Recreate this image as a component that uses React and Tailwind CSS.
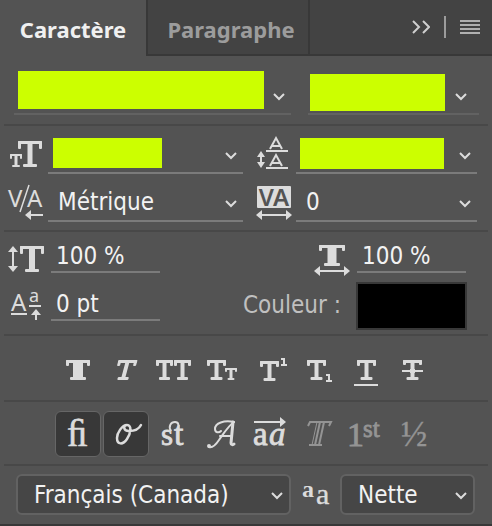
import React from "react";

const SERIF = '"Liberation Serif", serif';
const SANS = '"Noto Sans", sans-serif';

/* Slab-serif T drawn inside the box x, y, w, h. */
function SlabT({ x, y, w, h, stem = 4, bar = 3, drop = 6, foot = 12 }) {
  const cx = x + w / 2;
  return (
    <g>
      <rect x={x} y={y} width={w} height={bar} rx="1" />
      <rect x={x} y={y} width={bar} height={drop} rx="1" />
      <rect x={x + w - bar} y={y} width={bar} height={drop} rx="1" />
      <rect x={cx - stem / 2} y={y} width={stem} height={h} />
      <rect x={cx - foot / 2} y={y + h - bar} width={foot} height={bar} rx="1" />
    </g>
  );
}

function HArrow({ x1, x2, y, left = true, right = true }) {
  return (
    <g>
      <rect x={x1 + (left ? 4 : 0)} y={y - 1} width={x2 - x1 - (left ? 4 : 0) - (right ? 4 : 0)} height="2" />
      {left && <path d={`M${x1} ${y}l6 -5v10z`} />}
      {right && <path d={`M${x2} ${y}l-6 -5v10z`} />}
    </g>
  );
}

function VArrow({ x, y1, y2, up = true, down = true, head = 5 }) {
  return (
    <g>
      <rect x={x - 1} y={y1 + (up ? 4 : 0)} width="2" height={y2 - y1 - (up ? 4 : 0) - (down ? 4 : 0)} />
      {up && <path d={`M${x} ${y1}l${head} 6h-${head * 2}z`} />}
      {down && <path d={`M${x} ${y2}l${head} -6h-${head * 2}z`} />}
    </g>
  );
}

function Icon({ w = 46, h = 46, className = "", children }) {
  return (
    <svg
      aria-hidden="true"
      width={w}
      height={h}
      viewBox={`0 0 ${w} ${h}`}
      fill="currentColor"
      className={`block shrink-0 ${className}`}
    >
      {children}
    </svg>
  );
}

function Chevron({ className = "" }) {
  return (
    <svg
      aria-hidden="true"
      width="12"
      height="8"
      viewBox="0 0 12 8"
      fill="none"
      stroke="#dcdcdc"
      strokeWidth="2"
      className={`pointer-events-none block shrink-0 ${className}`}
    >
      <path d="M1 1l5 5 5-5" />
    </svg>
  );
}

function Combo({ label, className, inputClass, chevronClass }) {
  return (
    <div className={`flex items-start justify-between border-b-2 ${className}`}>
      <input aria-label={label} className={`min-w-0 bg-[#ccff00] px-2 text-black outline-none ${inputClass}`} />
      <button type="button" aria-label={`${label} : liste`} className={chevronClass}>
        <Chevron />
      </button>
    </div>
  );
}

function UnderlineSelect({ label, options }) {
  return (
    <div className="relative h-12 border-b-2 border-[#7b7b7b]">
      <select
        aria-label={label}
        className="mt-2.5 h-9 w-full appearance-none bg-transparent pl-[10px] text-2xl/9 text-[#f2f2f2] outline-none"
      >
        {options.map((o) => (
          <option key={o}>{o}</option>
        ))}
      </select>
      <Chevron className="absolute top-[26px] right-1.5" />
    </div>
  );
}

function BoxSelect({ label, options }) {
  return (
    <div className="relative">
      <select
        aria-label={label}
        className="block h-[41px] w-full appearance-none rounded-md border-2 border-[#626262] bg-[#464646] pl-4 text-2xl/9 text-[#f2f2f2] outline-none"
      >
        {options.map((o) => (
          <option key={o}>{o}</option>
        ))}
      </select>
      <Chevron className="absolute top-[18px] right-2" />
    </div>
  );
}

function ValueInput({ label, value }) {
  return (
    <input
      aria-label={label}
      defaultValue={value}
      className="mt-[7px] block h-[33px] w-full min-w-0 border-b-2 border-[#7b7b7b] bg-transparent pl-[5px] text-2xl/8 text-[#f2f2f2] outline-none"
    />
  );
}

const styleButtons = [
  ["Faux gras", <SlabT key="i" x={11} y={13} w={24} h={20} stem={10} foot={16} />],
  [
    "Faux italique",
    <g key="i" transform="translate(9 0) skewX(-15)">
      <SlabT x={10} y={13} w={19} h={20} stem={4} foot={11} />
    </g>,
  ],
  [
    "Tout en capitales",
    <g key="i">
      <SlabT x={5} y={13} w={17} h={20} foot={11} />
      <SlabT x={23} y={13} w={17} h={20} foot={11} />
    </g>,
  ],
  [
    "Petites capitales",
    <g key="i">
      <SlabT x={8} y={13} w={19} h={20} />
      <SlabT x={26} y={21} w={12} h={12} bar={2} stem={3} drop={4} foot={7} />
    </g>,
  ],
  [
    "Exposant",
    <g key="i">
      <SlabT x={13} y={14} w={19} h={20} />
      <path d="M34 11h4v6h2v2h-6v-2h2v-4h-2z" />
    </g>,
  ],
  [
    "Indice",
    <g key="i">
      <SlabT x={12} y={13} w={19} h={20} />
      <path d="M31 27h4v6h2v2h-6v-2h2v-4h-2z" />
    </g>,
  ],
  [
    "Souligné",
    <g key="i">
      <SlabT x={14} y={13} w={19} h={20} />
      <rect x="11" y="37" width="24" height="2" />
    </g>,
  ],
  [
    "Barré",
    <g key="i">
      <SlabT x={12} y={13} w={19} h={20} drop={5} />
      <rect x="11" y="22" width="21" height="4" fill="#535353" />
      <rect x="11" y="23" width="21" height="2" />
      <rect x="19" y="22" width="5" height="4" />
    </g>,
  ],
];

const openTypeButtons = [
  [
    "Ligatures standard",
    "on",
    <text key="i" x="12" y="35" fontSize="37" fontFamily={SERIF} stroke="currentColor" strokeWidth="0.6">ﬁ</text>,
  ],
  [
    "Variantes contextuelles",
    "on",
    <path
      key="i"
      fill="none"
      stroke="currentColor"
      strokeWidth="2.5"
      strokeLinecap="round"
      d="M24 14C19 14 14 22 14 27C14 34 20 34 24 28C28 22 29 14 24 14C20 14 20 20 26 20C32 20 36 18 38 14"
    />,
  ],
  [
    "Ligatures conditionnelles",
    "off",
    <g key="i">
      <text x="10" y="34" fontSize="31" fontFamily={SERIF} stroke="currentColor" strokeWidth="0.8">s</text>
      <text x="23" y="34" fontSize="34" fontFamily={SERIF} stroke="currentColor" strokeWidth="0.8">t</text>
      <path d="M20 20C17 15 20 11 24 11C28 11 28 14 27 22" fill="none" stroke="currentColor" strokeWidth="2" />
    </g>,
  ],
  [
    "Lettre ornée",
    "off",
    <g key="i" fill="none" stroke="currentColor" strokeWidth="2" strokeLinecap="round">
      <path d="M35 11C30 14 25 22 20 29C16 35 13 37 10 36" />
      <path d="M34 11L32 32C32 34 34 34 35 33" strokeWidth="3" />
      <path d="M21 25H33" />
      <path d="M35 11C25 9 16 12 16 18C16 22 20 22 22 20" />
      <circle cx="10" cy="35" r="1" />
    </g>,
  ],
  [
    "Variantes stylistiques",
    "off",
    <g key="i">
      <text x="6" y="34" fontSize="33" fontFamily={SERIF} stroke="currentColor" strokeWidth="0.8">a</text>
      <text x="22" y="34" fontSize="33" fontStyle="italic" fontFamily={SERIF} stroke="currentColor" strokeWidth="0.8">a</text>
      <HArrow x1={7} x2={39} y={11} left={false} />
    </g>,
  ],
  [
    "Caractères de titrage",
    "dim",
    <g key="i" fill="none" stroke="currentColor" strokeWidth="2">
      <path d="M13 15L15 11H36L34 15" />
      <path d="M22 11L17 34" strokeWidth="1" />
      <path d="M25 11L20 34" />
      <path d="M29 11L24 34" />
      <path d="M14 34H27" />
    </g>,
  ],
  [
    "Ordinales",
    "dim",
    <g key="i" stroke="currentColor" fontFamily={SERIF}>
      <text x="4" y="35" fontSize="34" strokeWidth="0.8">1</text>
      <text x="20" y="26" fontSize="25" strokeWidth="0.8">st</text>
    </g>,
  ],
  [
    "Fractions",
    "dim",
    <text key="i" x="10" y="35" fontSize="35" fontFamily={SERIF} stroke="currentColor" strokeWidth="0.4">½</text>,
  ],
];

const stateClass = {
  on: "border-[#666666] bg-[#383838] text-[#dcdcdc]",
  off: "border-transparent text-[#dcdcdc]",
  dim: "border-transparent text-[#949494]",
};

export default function App() {
  return (
    <main className="min-h-screen w-full border-b-2 border-[#383838] bg-[#535353] font-['DejaVu_Sans_Condensed','Noto_Sans',sans-serif] text-[#dcdcdc]">
      <header className="flex h-14 items-stretch bg-[#434343] font-['Noto_Sans',sans-serif] text-[22px] font-bold">
        <div role="tablist" className="flex">
          <button type="button" role="tab" aria-selected="true" className="w-[146px] bg-[#535353] pt-0.5 text-[#f0f0f0]">
            Caractère
          </button>
          <button
            type="button"
            role="tab"
            aria-selected="false"
            className="w-[164px] border-x-2 border-b-2 border-[#383838] pt-1 pl-1.5 text-[#9c9c9c]"
          >
            Paragraphe
          </button>
        </div>
        <div className="flex flex-1 items-start justify-end border-b-2 border-[#383838] pt-4 pr-3">
          <button type="button" aria-label="Réduire le panneau" className="mt-1 mr-3.5">
            <Icon w={18} h={16} className="text-[#cfcfcf]">
              <path d="M1 1l6 6-6 6M11 1l6 6-6 6" fill="none" stroke="currentColor" strokeWidth="2" />
            </Icon>
          </button>
          <span className="h-[22px] w-0.5 bg-[#9c9c9c]" />
          <button type="button" aria-label="Menu du panneau" className="mt-1 ml-3.5">
            <Icon w={20} h={14} className="text-[#b0b0b0]">
              <path d="M0 0h20v2H0zM0 4h20v2H0zM0 8h20v2H0zM0 12h20v2H0z" />
            </Icon>
          </button>
        </div>
      </header>

      <div className="mx-1 divide-y-2 divide-[#484848]">
        <section className="grid grid-cols-[277fr_171fr] items-start gap-x-[17px] pt-[15px] pr-[9px] pb-[9px] pl-[10px]">
          <Combo label="Police" className="h-11 border-[#626262] pr-1.5 pl-1" inputClass="h-[38px] w-[246px]" chevronClass="mt-[22px]" />
          <Combo label="Style de police" className="mt-[3px] h-[41px] border-[#626262] pr-3 pl-0.5" inputClass="h-[37px] w-[86%]" chevronClass="mt-[19px]" />
        </section>

        <section className="grid grid-cols-[44px_195fr_53px_181fr] pr-[11px] pb-2">
          <Icon w={44} h={48}>
            <SlabT x={6} y={28} w={12} h={13} bar={2} stem={3} drop={5} foot={8} />
            <SlabT x={14} y={15} w={24} h={26} stem={5} drop={8} foot={14} />
          </Icon>
          <Combo label="Corps" className="h-12 border-[#7b7b7b] pt-3 pr-1.5 pl-[5px]" inputClass="h-[30px] w-[59%]" chevronClass="mt-3.5" />
          <Icon w={53} h={48}>
            <g fill="none" stroke="currentColor" strokeWidth="2">
              <path d="M27 23l6-11 6 11M29 20h8M27 40l6-11 6 11M29 37h8" />
              <path d="M23 25h22M23 42h22" />
            </g>
            <VArrow x={18} y1={25} y2={42} head={4} />
          </Icon>
          <Combo label="Interligne" className="h-12 border-[#7b7b7b] pt-3 pr-1.5 pl-1" inputClass="h-[31px] w-[84%]" chevronClass="mt-3.5" />

          <Icon w={44} h={48}>
            <text x="4" y="33" fontSize="24" fontFamily={SANS}>V</text>
            <text x="23" y="33" fontSize="24" fontFamily={SANS}>A</text>
            <path d="M25 11L16 38" fill="none" stroke="currentColor" strokeWidth="1.5" />
            <HArrow x1={21} x2={39} y={41} right={false} />
          </Icon>
          <UnderlineSelect label="Crénage" options={["Métrique", "Optique", "0"]} />
          <Icon w={53} h={48}>
            <rect x="14" y="12" width="34" height="22" rx="1" />
            <text x="31" y="32" textAnchor="middle" fontSize="24" fontWeight="600" fontFamily={SANS} fill="#535353">VA</text>
            <HArrow x1={13} x2={49} y={41} />
          </Icon>
          <UnderlineSelect label="Approche" options={["0", "25", "50"]} />
        </section>

        <section className="grid grid-cols-[47px_109fr_197px_109fr] pt-px pr-[22px] pb-1">
          <Icon w={47} h={48}>
            <VArrow x={9} y1={13} y2={39} />
            <SlabT x={16} y={13} w={24} h={26} stem={6} drop={8} foot={14} />
          </Icon>
          <ValueInput label="Échelle verticale" value="100 %" />
          <Icon w={197} h={48}>
            <SlabT x={159} y={12} w={26} h={21} stem={9} drop={6} foot={16} />
            <HArrow x1={154} x2={190} y={38} />
          </Icon>
          <ValueInput label="Échelle horizontale" value="100 %" />

          <Icon w={47} h={48}>
            <text x="7" y="30" fontSize="24" fontFamily={SANS}>A</text>
            <text x="25" y="21" fontSize="18" fontFamily={SANS}>a</text>
            <rect x="7" y="32" width="16" height="2" />
            <rect x="25" y="24" width="12" height="2" />
            <VArrow x={32} y1={28} y2={39} down={false} />
          </Icon>
          <ValueInput label="Décalage vertical" value="0 pt" />
          <label htmlFor="couleur" className="pt-1.5 pr-4 text-right text-2xl/9 text-[#c0c0c0]">
            Couleur :
          </label>
          <button
            id="couleur"
            type="button"
            aria-label="Couleur du texte"
            className="-mx-px mt-px h-12 border-2 border-[#383838] bg-black"
          />
        </section>

        <section className="grid grid-cols-8 justify-items-center px-[50px] pt-[11px] pb-[7px]">
          {styleButtons.map(([label, icon]) => (
            <button key={label} type="button" aria-label={label}>
              <Icon>{icon}</Icon>
            </button>
          ))}
        </section>

        <section className="grid grid-cols-8 justify-items-center px-[50px] pt-[9px] pb-[7px]">
          {openTypeButtons.map(([label, state, icon]) => (
            <button
              key={label}
              type="button"
              aria-label={label}
              disabled={state === "dim"}
              aria-pressed={state === "on"}
              className={`flex size-[46px] items-center justify-center rounded-md border ${stateClass[state]}`}
            >
              <Icon>{icon}</Icon>
            </button>
          ))}
        </section>

        <section className="grid grid-cols-[275fr_49px_135fr] pt-2 pr-[13px] pb-[9px] pl-3">
          <BoxSelect label="Langue" options={["Français (Canada)", "Français", "English"]} />
          <Icon w={49} h={41}>
            <text x="11" y="23" fontSize="24" fontWeight="700" fontFamily={SERIF}>a</text>
            <text x="25" y="30" fontSize="30" fontFamily={SERIF} stroke="currentColor" strokeWidth="0.4">a</text>
          </Icon>
          <BoxSelect label="Lissage" options={["Nette", "Précise", "Forte"]} />
        </section>
      </div>
    </main>
  );
}
